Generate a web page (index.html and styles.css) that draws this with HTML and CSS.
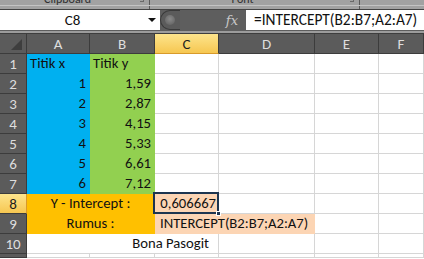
FILE: index.html
```html
<!DOCTYPE html>
<html>
<head>
<meta charset="utf-8">
<link rel="stylesheet" href="styles.css">
</head>
<body>
<div class="ribbon">
  <div class="rtop">
    <div class="rgrp g1"><span class="rlabel">Clipboard</span><span class="lmark"></span></div>
    <div class="rgrp g2"><span class="rlabel">Font</span><span class="lmark"></span></div>
    <div class="rgrp g3"></div>
  </div>
  <div class="rbot">
    <div class="g1"></div>
    <div class="g2"></div>
    <div class="g3"></div>
  </div>
</div>
<div class="fbar">
  <div class="namebox"><span class="nbtext">C8</span><span class="nbarrow"></span></div>
  <div class="ctrl">
    <div class="pill"><span class="knob"></span></div>
    <span class="fx">fx</span>
  </div>
  <div class="formula">=INTERCEPT(B2:B7;A2:A7)</div>
</div>
<div class="sep"></div>
<div class="sheet">
  <div class="hd corner"><span class="tri"></span></div>
  <div class="hd">A</div>
  <div class="hd">B</div>
  <div class="hd sel">C</div>
  <div class="hd">D</div>
  <div class="hd">E</div>
  <div class="hd">F</div>

  <div class="hd rn">1</div>
  <div class="c blue">Titik x</div>
  <div class="c green">Titik y</div>
  <div class="c"></div><div class="c"></div><div class="c"></div><div class="c"></div>

  <div class="hd rn">2</div>
  <div class="c blue num">1</div>
  <div class="c green num">1,59</div>
  <div class="c"></div><div class="c"></div><div class="c"></div><div class="c"></div>

  <div class="hd rn">3</div>
  <div class="c blue num">2</div>
  <div class="c green num">2,87</div>
  <div class="c"></div><div class="c"></div><div class="c"></div><div class="c"></div>

  <div class="hd rn">4</div>
  <div class="c blue num">3</div>
  <div class="c green num">4,15</div>
  <div class="c"></div><div class="c"></div><div class="c"></div><div class="c"></div>

  <div class="hd rn">5</div>
  <div class="c blue num">4</div>
  <div class="c green num">5,33</div>
  <div class="c"></div><div class="c"></div><div class="c"></div><div class="c"></div>

  <div class="hd rn">6</div>
  <div class="c blue num">5</div>
  <div class="c green num">6,61</div>
  <div class="c"></div><div class="c"></div><div class="c"></div><div class="c"></div>

  <div class="hd rn">7</div>
  <div class="c blue num">6</div>
  <div class="c green num">7,12</div>
  <div class="c"></div><div class="c"></div><div class="c"></div><div class="c"></div>

  <div class="hd rn sel">8</div>
  <div class="c orange span2 center">Y - Intercept :</div>
  <div class="c peach num active">0,606667<span class="handle"></span></div>
  <div class="c"></div><div class="c"></div><div class="c"></div>

  <div class="hd rn">9</div>
  <div class="c orange span2 center">Rumus :</div>
  <div class="c peach span2 f9">INTERCEPT(B2:B7;A2:A7)</div>
  <div class="c"></div><div class="c"></div>

  <div class="hd rn">10</div>
  <div class="c span3 r10">Bona Pasogit</div>
  <div class="c"></div><div class="c"></div><div class="c"></div>

  <div class="hd rn"></div>
  <div class="c"></div><div class="c"></div><div class="c"></div><div class="c"></div><div class="c"></div><div class="c"></div>
</div>
</body>
</html>
```
FILE: styles.css
```css
* { box-sizing: border-box; }
html, body { margin: 0; padding: 0; }
body {
  width: 424px;
  height: 259px;
  overflow: hidden;
  background: #ffffff;
  font-family: "Calibri", "Carlito", "Liberation Sans", Arial, sans-serif;
}

.ribbon {
  height: 9px;
  background: #a2a2a2;
  overflow: hidden;
}
.rtop {
  height: 6px;
  display: flex;
  border-bottom: 1px solid #c4c4c4;
}
.rbot {
  height: 3px;
  display: flex;
}
.rgrp {
  display: flex;
  justify-content: center;
  align-items: flex-start;
  overflow: hidden;
  position: relative;
}
.g1 { width: 150px; border-right: 1px solid #5a5a5a; flex-shrink: 0; }
.g2 { width: 210px; border-right: 1px solid #5a5a5a; flex-shrink: 0; }
.g3 { flex: 1; }
.g1 .rlabel { margin-right: 14px; }
.g2 .rlabel { margin-right: 24px; }
.rlabel {
  font-size: 12px;
  line-height: 12px;
  margin-top: -7px;
  color: #303030;
}
.lmark {
  position: absolute;
  right: 5px;
  top: 0;
  width: 4px;
  height: 2px;
  border-bottom: 1px solid #6a6a6a;
  border-right: 1px solid #6a6a6a;
}

.fbar {
  height: 21px;
  background: #6a6a6a;
  display: flex;
  border-top: 1px solid #444;
}
.namebox {
  width: 160px;
  flex-shrink: 0;
  background: #ffffff;
  display: flex;
  align-items: center;
}
.nbtext {
  width: 145px;
  text-align: center;
  font-size: 15px;
  color: #111;
}
.nbarrow {
  width: 0;
  height: 0;
  border-left: 4px solid transparent;
  border-right: 4px solid transparent;
  border-top: 4px solid #111;
  margin-left: 3px;
}
.ctrl {
  width: 86px;
  flex-shrink: 0;
  display: flex;
  align-items: center;
  background: #5e5e5e;
}
.pill {
  width: 20px;
  height: 20px;
  border: 1px solid #3a3a3a;
  border-right: none;
  border-radius: 10px 0 0 10px;
  background: #5b5b5b;
  display: flex;
  align-items: center;
  padding-left: 4px;
}
.knob {
  width: 10px;
  height: 10px;
  border-radius: 50%;
  background: radial-gradient(circle at 50% 40%, #8a8a8a, #6a6a6a 70%);
}
.fx {
  margin-left: auto;
  margin-right: 8px;
  font-family: "DejaVu Serif", serif;
  font-style: italic;
  font-size: 13px;
  color: #c8c8c8;
}
.formula {
  flex: 1;
  min-width: 0;
  overflow: hidden;
  background: #ffffff;
  font-size: 15.4px;
  line-height: 20px;
  padding-left: 8px;
  color: #111;
  white-space: nowrap;
}

.sep {
  height: 4px;
  background: #9c9c9c;
  border-top: 1px solid #5e5e5e;
  border-bottom: 1px solid #3e3e3e;
}

.sheet {
  display: grid;
  grid-template-columns: 27px 63px 65px 64px 96px 64px 1fr;
  grid-template-rows: 20px repeat(10, 20px) 4px;
  font-size: 14.67px;
}
.hd {
  background: #5b5b5b;
  color: #dedede;
  border-right: 1px solid #3c3c3c;
  border-bottom: 1px solid #3c3c3c;
  display: flex;
  align-items: center;
  justify-content: center;
  font-size: 15px;
}
.corner {
  justify-content: flex-end;
  align-items: flex-end;
  padding: 0 4px 3px 0;
}
.tri {
  width: 0;
  height: 0;
  border-left: 11px solid transparent;
  border-bottom: 11px solid #3e3e3e;
}
.hd.sel {
  background: linear-gradient(#fde48c, #f6c751);
  color: #1e1e1e;
  border-bottom-color: #d89a2a;
}
.rn.sel { border-bottom-color: #3c3c3c; border-right-color: #d89a2a; }

.c {
  border-right: 1px solid #d6d6d6;
  border-bottom: 1px solid #d6d6d6;
  color: #111;
  line-height: 19px;
  padding: 0 3px;
  white-space: nowrap;
}
.num { text-align: right; }
.center { text-align: center; }
.span2 { grid-column: span 2; }
.span3 { grid-column: span 3; }
.blue { background: #00b0f0; border-color: #00b0f0; }
.green { background: #92d050; border-color: #92d050; }
.orange { background: #ffc000; border-color: #ffc000; }
.peach { background: #fcd5b4; border-color: #fcd5b4; }
.f9 { padding-left: 5px; }
.r10 { text-align: right; padding-right: 9px; border-right-color: #d6d6d6; }

.active {
  position: relative;
  padding-right: 2px;
}
.active::after {
  content: "";
  position: absolute;
  left: -2px;
  top: -2px;
  right: -1px;
  bottom: -1px;
  border: 2px solid #1d3550;
}
.handle {
  position: absolute;
  right: -3px;
  bottom: -3px;
  width: 5px;
  height: 5px;
  background: #1d3550;
  border: 1px solid #ffffff;
  z-index: 2;
}
```
